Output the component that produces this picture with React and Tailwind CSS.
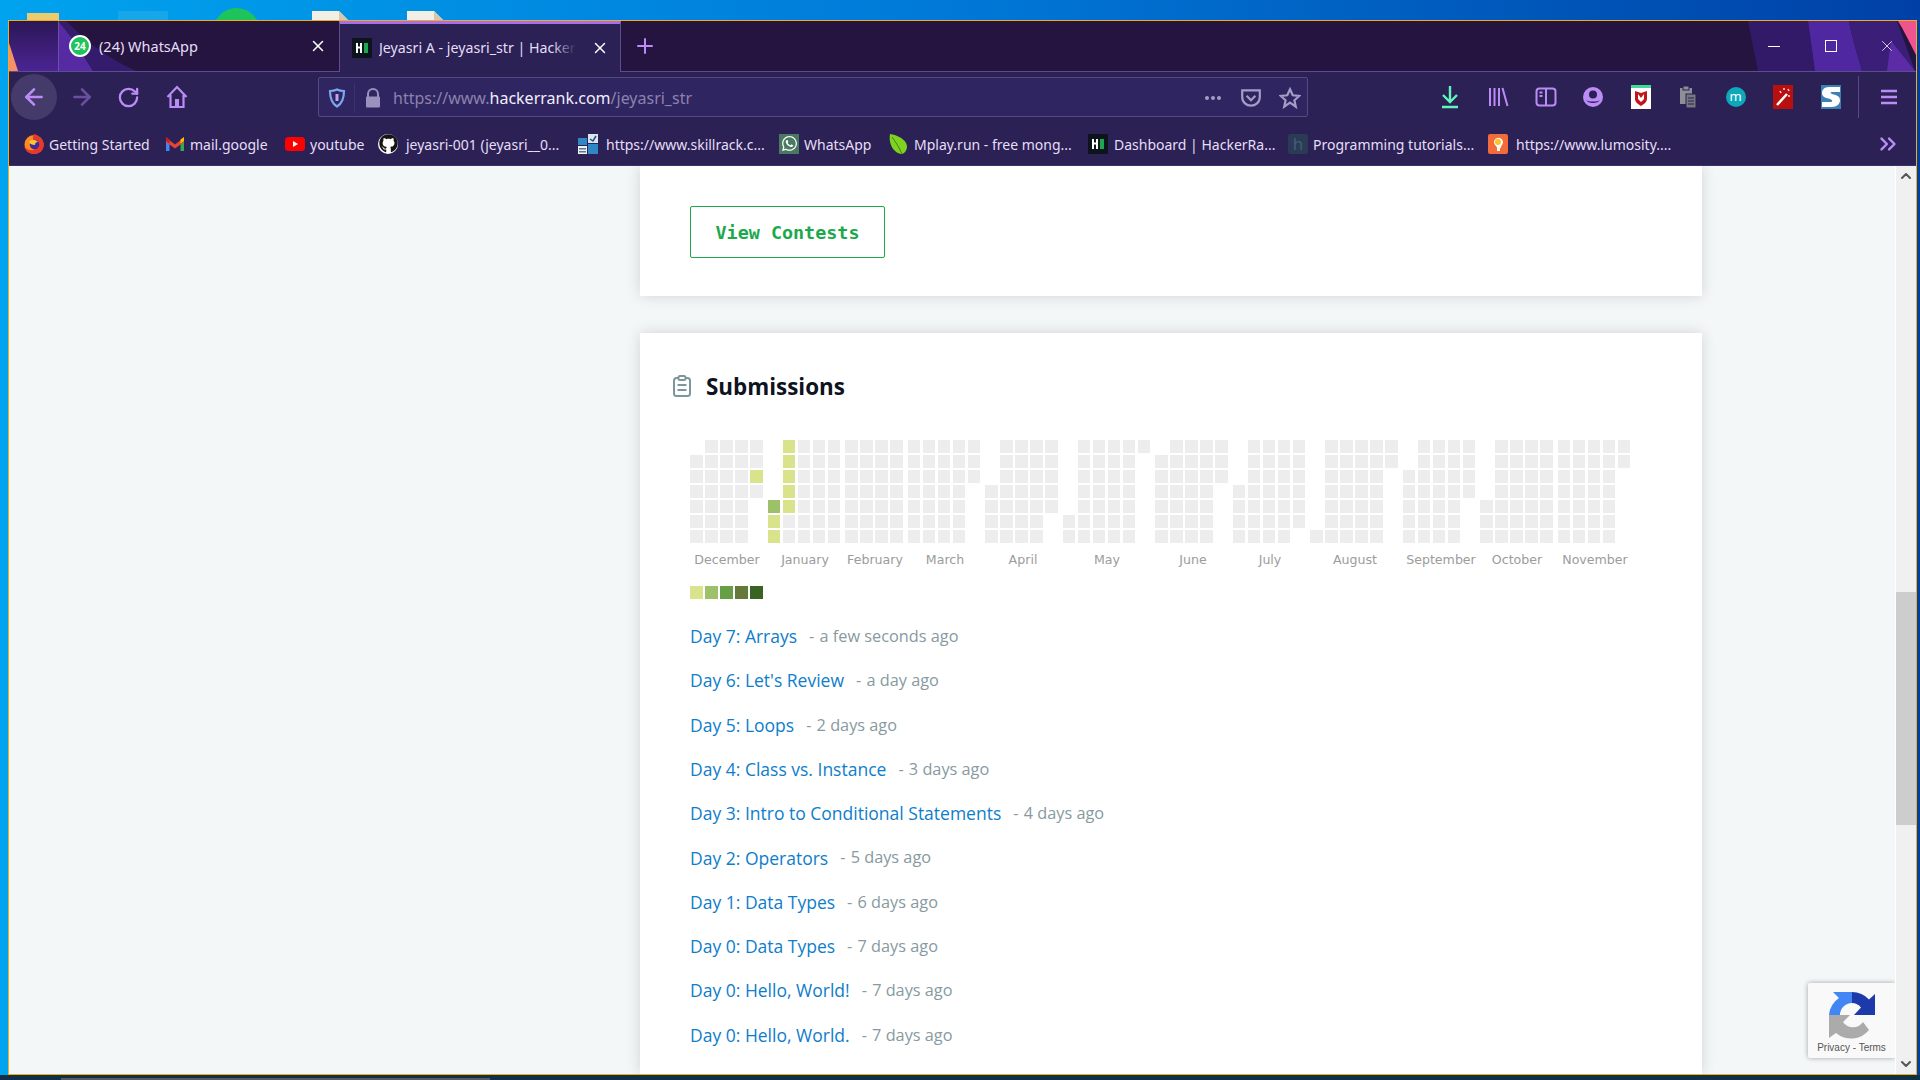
import React from "react";
import { ArrowLeft, ArrowRight, RotateCw, ChevronsRight, ChevronUp, ChevronDown, X, Plus } from "lucide-react";
import { FaGithub, FaWhatsapp } from "react-icons/fa";

const uiFont = "font-['Noto_Sans',sans-serif]";

const HackerRankIcon = () => (
  <svg width="20" height="20" viewBox="0 0 20 20" className="shrink-0">
    <rect width="20" height="20" fill="#0e141e" />
    <path d="M4 5h2v3.500h2V5h2v10H8v-4.500H6V15H4z" fill="#fff" />
    <rect x="12" y="5" width="4" height="10" fill="#1ba94c" />
  </svg>
);

const FirefoxIcon = () => (
  <svg width="20" height="20" viewBox="0 0 20 20" className="shrink-0">
    <circle cx="10" cy="10.500" r="9.500" fill="#ff8a1f" />
    <path d="M10 0c4 1 9 5 10 10 0 6-4 10-10 10-6 0-9-4-10-8 2 3 6 5 9 4 4-1 4-4 2-6C9 8 8 4 10 0z" fill="#e8382d" />
    <circle cx="10.500" cy="10.500" r="4.800" fill="#3f2a9a" />
    <path d="M5 8c2-3 6-3 9 0-2 0-3 1-3 3-3 0-5-1-6-3z" fill="#ffc531" />
  </svg>
);

const GmailIcon = () => (
  <svg width="20" height="20" viewBox="0 0 20 20" className="shrink-0">
    <path d="M1 5v12h3.500V8z" fill="#4285f4" />
    <path d="M15.500 8v9H19V5z" fill="#34a853" />
    <path d="M1 3.500 10 10.500l9-7v4.500l-9 6.500L1 8z" fill="#ea4335" />
    <path d="M15.500 5.500 19 3v4l-3.500 2.500z" fill="#fbbc04" />
    <path d="M1 3v4l3.500 2.500v-4z" fill="#c5221f" />
  </svg>
);

const YoutubeIcon = () => (
  <svg width="20" height="20" viewBox="0 0 20 20" className="shrink-0">
    <rect y="3" width="20" height="14" rx="3.500" fill="#f00" />
    <path d="M8 7l5 3-5 3z" fill="#fff" />
  </svg>
);

const GithubIcon = () => (
  <div className="flex h-[20px] w-[20px] shrink-0 items-center justify-center rounded-full bg-white">
    <FaGithub className="text-[19px] text-[#161514]" />
  </div>
);

const SkillrackIcon = () => (
  <svg width="20" height="20" viewBox="0 0 20 20" className="shrink-0">
    <rect y="4" width="9" height="7" fill="#2f87c5" />
    <rect x="10" y="0" width="10" height="9" fill="#d9e7ef" />
    <path d="M12 5l3 2 3-5" stroke="#2b4f78" strokeWidth="1.500" fill="none" />
    <rect x="10" y="10" width="10" height="10" fill="#2f87c5" />
    <rect y="12" width="9" height="8" fill="#eef3f6" />
    <rect x="1" y="14" width="7" height="1.500" fill="#60758a" />
    <rect x="1" y="17" width="7" height="1.500" fill="#60758a" />
  </svg>
);

const WhatsappSquare = () => (
  <div className="flex h-[20px] w-[20px] shrink-0 items-center justify-center bg-[#4b7860]">
    <FaWhatsapp className="text-[17px] text-white" />
  </div>
);

const LeafIcon = () => (
  <svg width="20" height="20" viewBox="0 0 20 20" className="shrink-0">
    <path d="M2 0c7 1 16 5 17 12 0 4-2 7-5 8C7 20 0 11 2 0z" fill="#7ed321" />
    <path d="M4 3c3 4 7 10 10 17" stroke="#3d6a10" strokeWidth="0.800" fill="none" />
  </svg>
);

const TutorialIcon = () => (
  <div className={`flex h-[20px] w-[20px] shrink-0 items-center justify-center rounded-[2px] bg-[#2b3b55] text-[17px] leading-none text-[#465a78] ${uiFont}`}>
    h
  </div>
);

const LumosityIcon = () => (
  <svg width="20" height="20" viewBox="0 0 20 20" className="shrink-0">
    <rect width="20" height="20" rx="2" fill="#f26b38" />
    <path d="M6 8a4.500 4.500 0 1 1 8 3c-1 1-1 2-1 3h-1v3H9v-3c0-2-3-3-3-6z" fill="#fff" />
    <circle cx="10" cy="8" r="3" fill="#ffc21f" />
  </svg>
);

const bookmarks = [
  { label: "Getting Started", icon: FirefoxIcon, w: "w-[141px]", gap: "gap-[5px]" },
  { label: "mail.google", icon: GmailIcon, w: "w-[120px]", gap: "gap-[5px]" },
  { label: "youtube", icon: YoutubeIcon, w: "w-[93px]", gap: "gap-[5px]" },
  { label: "jeyasri-001 (jeyasri__0...", icon: GithubIcon, w: "w-[200px]", gap: "gap-[8px]" },
  { label: "https://www.skillrack.c...", icon: SkillrackIcon, w: "w-[201px]", gap: "gap-[8px]" },
  { label: "WhatsApp", icon: WhatsappSquare, w: "w-[109px]", gap: "gap-[5px]" },
  { label: "Mplay.run - free mong...", icon: LeafIcon, w: "w-[200px]", gap: "gap-[6px]" },
  { label: "Dashboard | HackerRa...", icon: HackerRankIcon, w: "w-[200px]", gap: "gap-[6px]" },
  { label: "Programming tutorials...", icon: TutorialIcon, w: "w-[200px]", gap: "gap-[5px]" },
  { label: "https://www.lumosity....", icon: LumosityIcon, w: "w-[200px]", gap: "gap-[8px]" },
];

const submissions = [
  { name: "Day 7: Arrays", time: "a few seconds ago" },
  { name: "Day 6: Let's Review", time: "a day ago" },
  { name: "Day 5: Loops", time: "2 days ago" },
  { name: "Day 4: Class vs. Instance", time: "3 days ago" },
  { name: "Day 3: Intro to Conditional Statements", time: "4 days ago" },
  { name: "Day 2: Operators", time: "5 days ago" },
  { name: "Day 1: Data Types", time: "6 days ago" },
  { name: "Day 0: Data Types", time: "7 days ago" },
  { name: "Day 0: Hello, World!", time: "7 days ago" },
  { name: "Day 0: Hello, World.", time: "7 days ago" },
];

// x of each column on the page, then first and last filled row
const months = [
  { label: "December", cx: 727, w: 13, cols: [[690, 1, 6], [705, 0, 6], [720, 0, 6], [735, 0, 6], [750, 0, 3]] },
  { label: "January", cx: 805, w: 12, cols: [[768, 4, 6], [783, 0, 6], [798, 0, 6], [813, 0, 6], [828, 0, 6]] },
  { label: "February", cx: 875, w: 13, cols: [[845, 0, 6], [860, 0, 6], [875, 0, 6], [890, 0, 6]] },
  { label: "March", cx: 945, w: 12, cols: [[908, 0, 6], [923, 0, 6], [938, 0, 6], [953, 0, 6], [968, 0, 2]] },
  { label: "April", cx: 1023, w: 13, cols: [[985, 3, 6], [1000, 0, 6], [1015, 0, 6], [1030, 0, 6], [1045, 0, 4]] },
  { label: "May", cx: 1107, w: 12, cols: [[1063, 5, 6], [1078, 0, 6], [1093, 0, 6], [1108, 0, 6], [1123, 0, 6], [1138, 0, 0]] },
  { label: "June", cx: 1193, w: 13, cols: [[1155, 1, 6], [1170, 0, 6], [1185, 0, 6], [1200, 0, 6], [1215, 0, 2]] },
  { label: "July", cx: 1270, w: 12, cols: [[1233, 3, 6], [1248, 0, 6], [1263, 0, 6], [1278, 0, 6], [1293, 0, 5]] },
  { label: "August", cx: 1355, w: 13, cols: [[1310, 6, 6], [1325, 0, 6], [1340, 0, 6], [1355, 0, 6], [1370, 0, 6], [1385, 0, 1]] },
  { label: "September", cx: 1441, w: 12, cols: [[1403, 2, 6], [1418, 0, 6], [1433, 0, 6], [1448, 0, 6], [1463, 0, 3]] },
  { label: "October", cx: 1517, w: 13, cols: [[1480, 4, 6], [1495, 0, 6], [1510, 0, 6], [1525, 0, 6], [1540, 0, 6]] },
  { label: "November", cx: 1595, w: 12, cols: [[1558, 0, 6], [1573, 0, 6], [1588, 0, 6], [1603, 0, 6], [1618, 0, 1]] },
];

const filled = {
  "750-2": "#d9e38b",
  "768-4": "#9dc06a",
  "768-5": "#d9e38b",
  "768-6": "#d9e38b",
  "783-0": "#d9e38b",
  "783-1": "#d9e38b",
  "783-2": "#d9e38b",
  "783-3": "#d9e38b",
  "783-4": "#d9e38b",
};

const Heatmap = () => (
  <svg width="960" height="130" className="block">
    {months.map((m) => (
      <g key={m.label}>
        {m.cols.map(([x, from, to]) =>
          Array.from({ length: to - from + 1 }, (_, i) => from + i).map((r) => (
            <rect key={`${x}-${r}`} x={x - 690} y={r * 15} width={m.w} height="13" fill={filled[`${x}-${r}`] || "#ededed"} />
          ))
        )}
        <text x={m.cx - 690} y="124" textAnchor="middle" fontSize="12.600" fill="#9c9c9c" fontFamily="'DejaVu Sans', sans-serif">
          {m.label}
        </text>
      </g>
    ))}
  </svg>
);

const TitleDecorLeft = () => (
  <svg width="130" height="50" viewBox="0 0 130 50" className="absolute left-0 top-0" preserveAspectRatio="none">
    <defs>
      <linearGradient id="dl" x1="0" y1="0" x2="0" y2="1">
        <stop offset="0" stopColor="#2c1756" />
        <stop offset="1" stopColor="#4a2494" />
      </linearGradient>
    </defs>
    <rect width="49" height="50" fill="url(#dl)" />
    <path d="M49 0C62 14 72 30 84 50H49z" fill="#562aa2" />
    <path d="M49 0h8c16 14 28 30 70 50H84C72 30 62 14 49 0z" fill="#351b6c" />
    <path d="M0 22L9 50H0z" fill="#f79068" />
  </svg>
);

const TitleDecorRight = () => (
  <svg width="170" height="50" viewBox="0 0 170 50" className="absolute right-0 top-0">
    <path d="M2 0h60l7 50H12C8 30 5 15 2 0z" fill="#321a68" />
    <path d="M62 0h41c3 18 9 34 13 50H69z" fill="#4f27a0" />
    <path d="M103 0h48l18 50h-53c-4-16-10-32-13-50z" fill="#3a1e78" />
    <path d="M145 20l24 30h-28z" fill="#5c2ca6" />
    <path d="M152 0h18v34C164 22 158 10 152 0z" fill="#f0548e" />
  </svg>
);

const ToolIcon = ({ children }) => (
  <svg width="24" height="24" viewBox="0 0 24 24" fill="none" stroke="#bb8cf6" strokeWidth="2" className="shrink-0">
    {children}
  </svg>
);

const ToolbarRight = () => (
  <div className="ml-auto flex items-center">
    <div className="flex w-[48px] justify-center">
      <svg width="24" height="26" viewBox="0 0 24 26" fill="none" stroke="#62f5b9" strokeWidth="2.400">
        <path d="M12 2v15M5 11l7 7 7-7M4 23h16" />
      </svg>
    </div>
    <div className="flex w-[48px] justify-center">
      <ToolIcon>
        <path d="M4 3v18M8.500 3v18M13 3v18M16.500 3l5 18" />
      </ToolIcon>
    </div>
    <div className="flex w-[47px] justify-center">
      <ToolIcon>
        <rect x="2.500" y="3.500" width="19" height="17" rx="3" />
        <path d="M12 3.500v17M5.500 7.500h3M5.500 11h3" />
      </ToolIcon>
    </div>
    <div className="flex w-[48px] justify-center">
      <svg width="20" height="20" viewBox="0 0 20 20">
        <circle cx="10" cy="10" r="10" fill="#bb8cf6" />
        <circle cx="10" cy="7.500" r="4" fill="#2b1f55" />
        <path d="M3 13c2 4 12 4 14 0-2 2-12 2-14 0z" fill="#2b1f55" />
      </svg>
    </div>
    <div className="flex w-[47px] justify-center">
      <svg width="20" height="24" viewBox="0 0 20 24">
        <rect width="20" height="24" fill="#fff" />
        <rect width="20" height="3" fill="#3ddc97" />
        <path d="M4 6l6 2 6-2v8c0 3-3 5-6 7-3-2-6-4-6-7z" fill="#c01818" />
        <path d="M7 9l3 4 3-4v5l-3 3-3-3z" fill="#fff" />
      </svg>
    </div>
    <div className="flex w-[48px] justify-center">
      <svg width="18" height="24" viewBox="0 0 18 24" fill="none">
        <path d="M1 3h12v16H1z" fill="#8e8e96" />
        <rect x="4" y="1" width="6" height="4" fill="#8e8e96" stroke="#2b1f55" />
        <rect x="7" y="9" width="10" height="14" fill="#77777f" stroke="#2b1f55" />
        <path d="M9 13h6M9 16h6M9 19h6" stroke="#2b1f55" />
      </svg>
    </div>
    <div className="flex w-[47px] justify-center">
      <div className={`flex h-[20px] w-[20px] items-center justify-center rounded-full bg-[#0fa8bb] pb-[2px] text-[13px] leading-none text-white ${uiFont}`}>m</div>
    </div>
    <div className="flex w-[48px] justify-center">
      <svg width="20" height="24" viewBox="0 0 20 24">
        <rect width="20" height="24" fill="#b80f0f" />
        <path d="M4 20L14 9" stroke="#fff" strokeWidth="2.500" />
        <path d="M15 4l1 2M7 6l1 2M17 11l-2 0M11 3l0 2" stroke="#ffd9d9" strokeWidth="1.500" />
      </svg>
    </div>
    <div className="flex w-[47px] justify-center">
      <svg width="20" height="24" viewBox="0 0 20 24">
        <rect width="20" height="24" fill="#3f80b4" />
        <path d="M19 2H8C3 2 1 5 1 8c0 4 4 5 8 6 3 1 3 3 0 3H1v5h10c5 0 8-3 8-7 0-4-4-5-8-6-2-1-2-2 0-2h8z" fill="#fff" />
      </svg>
    </div>
    <div className="ml-[4px] h-[42px] w-px bg-[#57498a]" />
    <div className="flex w-[57px] justify-center pl-[2px]">
      <svg width="16" height="16" viewBox="0 0 16 16" fill="none" stroke="#bb8cf6" strokeWidth="2.400">
        <path d="M0 2h16M0 8h16M0 14h16" />
      </svg>
    </div>
  </div>
);

const RecaptchaLogo = () => (
  <svg width="48" height="48" viewBox="0 0 48 48" className="block">
    <path d="M24 1a23 23 0 0 1 17 7.500L47 3v21H26l7-7.500A12 12 0 0 0 24 12z" fill="#1c3aa9" />
    <path d="M24 1H5l6 6A23 23 0 0 0 1 24h11a12 12 0 0 1 12-12z" fill="#4285f4" />
    <path d="M1 24h21l-7 7a12 12 0 0 0 20 0l6 8a23 23 0 0 1-33 3l-7 5z" fill="#ababab" />
  </svg>
);

const DesktopDoc = ({ className }) => (
  <svg width="38" height="9" viewBox="0 0 38 9" className={className}>
    <path d="M0 0h27l9 9H0z" fill="#f1efe6" />
    <path d="M27 0l9 9h-9z" fill="#d8c8a8" />
  </svg>
);

const App = () => {
  return (
    <div className="flex h-screen w-screen flex-col overflow-hidden bg-gradient-to-r from-[#00a3ee] via-[#0078d7] to-[#0040a6]">
      <div className="relative h-[20px] shrink-0">
        <div className="absolute left-[27px] top-[13px] h-[7px] w-[32px] bg-[#eccb6e]" />
        <div className="absolute left-[118px] top-[11px] h-[9px] w-[50px] bg-[#18a6ea]" />
        <div className="absolute left-[213px] top-[8px] h-[47px] w-[47px] rounded-full bg-[#1ec35c]" />
        <DesktopDoc className="absolute left-[312px] top-[11px]" />
        <DesktopDoc className="absolute left-[407px] top-[11px]" />
      </div>

      <div className={`relative ml-[8px] mr-[3px] flex min-h-0 flex-1 flex-col border border-[#f5ad14] ${uiFont}`}>
        {/* tab strip */}
        <div className="relative flex h-[51px] shrink-0 border-b border-[#5c4d8f] bg-[#25143f]">
          <TitleDecorLeft />
          <TitleDecorRight />
          <div className="relative ml-[49px] flex h-[50px] w-[281px] items-center border-l border-[#6b4fa8] pl-[10px] text-[14.500px] text-[#e6def7]">
            <div className="flex h-[22px] w-[22px] items-center justify-center rounded-full border-2 border-white bg-[#1ec35c] text-[10px] font-bold leading-none text-white">24</div>
            <span className="ml-[8px] pt-[2px]">(24) WhatsApp</span>
            <X size={18} strokeWidth={2} className="absolute left-[250px] text-white" />
          </div>
          <div className="relative flex h-[51px] w-[282px] items-center border-x border-[#5c4d8f] border-t-[3px] border-t-[#a770e8] bg-[#2b2155] pl-[12px] text-[14.200px] text-[#e6def7]">
            <HackerRankIcon />
            <div className="relative ml-[7px] w-[197px] overflow-hidden whitespace-nowrap">
              Jeyasri A - jeyasri_str | Hacker
              <div className="absolute inset-y-0 right-0 w-[24px] bg-gradient-to-r from-transparent to-[#2b2155]" />
            </div>
            <X size={18} strokeWidth={2} className="absolute left-[251px] text-white" />
          </div>
          <Plus size={24} strokeWidth={2} className="relative ml-[12px] mt-[13px] text-[#bb8cf6]" />
          <div className="relative ml-auto flex h-[50px] text-white">
            <div className="flex w-[57px] items-center justify-center">
              <div className="h-px w-[12px] bg-white" />
            </div>
            <div className="flex w-[57px] items-center justify-center">
              <div className="h-[12px] w-[12px] border border-white" />
            </div>
            <div className="flex w-[57px] items-center justify-center pr-[2px]">
              <X size={18} strokeWidth={1} />
            </div>
          </div>
        </div>

        {/* nav bar */}
        <div className="flex h-[50px] shrink-0 items-center bg-[#2b2155] pl-[2px]">
          <div className="flex h-[46px] w-[46px] items-center justify-center rounded-full bg-[#453b6b]">
            <ArrowLeft size={26} strokeWidth={2.400} className="text-[#bb8cf6]" />
          </div>
          <ArrowRight size={26} strokeWidth={2.400} className="ml-[12px] text-[#6b4f9f]" />
          <RotateCw size={23} strokeWidth={2.400} className="ml-[22px] text-[#bb8cf6]" />
          <svg width="22" height="24" viewBox="0 0 22 24" fill="none" stroke="#bb8cf6" strokeWidth="2.200" className="ml-[26px]">
            <path d="M1.500 12L11 2l9.500 10M4.500 10v12h13V10" />
            <rect x="9" y="14" width="4" height="8" fill="#bb8cf6" stroke="none" />
          </svg>

          <div className="ml-[130px] flex h-[40px] w-[990px] shrink-0 items-center rounded-[2px] border border-[#55497f] bg-[#2f2560] pt-[2px] text-[16px]">
            <svg width="18" height="20" viewBox="0 0 18 20" fill="none" className="ml-[9px]">
              <path d="M9 1.500c2 1 5 1.500 7 1.500 0 8-2 12.500-7 15.500C4 15.500 2 11 2 3c2 0 5-.5 7-1.500z" stroke="#7fa6f0" strokeWidth="2.200" />
              <rect x="7.500" y="6" width="3" height="7" fill="#b9a7ec" />
            </svg>
            <div className="ml-[8px] h-[30px] w-px bg-[#3b3070]" />
            <svg width="16" height="20" viewBox="0 0 16 20" className="ml-[10px]">
              <path d="M3 9V6a5 5 0 0 1 10 0v3" fill="none" stroke="#9b91bd" strokeWidth="2" />
              <rect x="1" y="8.500" width="14" height="11" rx="1" fill="#9b91bd" />
            </svg>
            <div className="ml-[12px] whitespace-nowrap text-[#8c82ad]">
              https://www.<span className="text-[#f2eefb]">hackerrank.com</span>/jeyasri_str
            </div>
            <div className="ml-auto flex items-center gap-[2px]">
              <div className="h-[4px] w-[4px] rounded-full bg-[#a79cc6]" />
              <div className="h-[4px] w-[4px] rounded-full bg-[#a79cc6]" />
              <div className="h-[4px] w-[4px] rounded-full bg-[#a79cc6]" />
            </div>
            <svg width="22" height="20" viewBox="0 0 20 18" fill="none" stroke="#a79cc6" strokeWidth="2" className="ml-[19px]">
              <path d="M2 2h16v6c0 5-4 8-8 8s-8-3-8-8z" />
              <path d="M6 7l4 4 4-4" />
            </svg>
            <svg width="22" height="22" viewBox="0 0 24 24" fill="none" stroke="#a79cc6" strokeWidth="2.400" className="ml-[17px] mr-[6px]">
              <path d="M12 2.500l3 6.500 7 .8-5.200 4.700 1.500 7L12 17l-6.300 4.500 1.500-7L2 9.800 9 9z" />
            </svg>
          </div>
          <ToolbarRight />
        </div>

        {/* bookmarks */}
        <div className="flex h-[44px] shrink-0 items-center border-b border-[#3c2f6a] bg-[#2b2155] pl-[15px] text-[14px] text-[#e6def7]">
          {bookmarks.map((b) => {
            const Icon = b.icon;
            return (
              <div key={b.label} className={`flex shrink-0 items-center whitespace-nowrap ${b.w} ${b.gap}`}>
                <Icon />
                <span className="pt-[1px]">{b.label}</span>
              </div>
            );
          })}
          <ChevronsRight size={26} strokeWidth={2.200} className="ml-[187px] text-[#bb8cf6]" />
        </div>

        {/* page */}
        <div className="flex min-h-0 flex-1">
          <div className="relative min-w-0 flex-1 overflow-hidden bg-[#f3f7f7]">
            <div className="ml-[631px] flex h-full w-[1062px] flex-col font-['Open_Sans',sans-serif]">
              <div className="shrink-0 bg-white pb-[38px] pl-[50px] pt-[40px] shadow-[0_0_14px_rgba(0,0,0,0.14)]">
                <div className="flex h-[52px] w-[195px] items-center justify-center rounded-[2px] border border-[#1ba94c] pt-[2px] font-['DejaVu_Sans_Mono',monospace] text-[18.400px] font-bold text-[#1ba94c]">
                  View Contests
                </div>
              </div>

              <div className="mt-[37px] min-h-0 flex-1 overflow-hidden bg-white pl-[33px] pt-[38px] shadow-[0_0_14px_rgba(0,0,0,0.14)]">
                <div className="flex h-[30px] items-center gap-[15px]">
                  <svg width="18" height="22" viewBox="0 0 18 22" fill="none" stroke="#7d979d" strokeWidth="2">
                    <rect x="1" y="3" width="16" height="18" rx="2.500" />
                    <rect x="5.500" y="1" width="7" height="4" rx="1.500" fill="#fff" />
                    <path d="M4.500 10h9M4.500 15h9" />
                  </svg>
                  <h2 className="pt-[2px] text-[22.400px] font-bold leading-none text-[#0e1320]">Submissions</h2>
                </div>

                <div className="ml-[17px] mt-[39px]">
                  <Heatmap />
                  <div className="mt-[16px] flex gap-[2px]">
                    <div className="h-[13px] w-[13px] bg-[#d9e38b]" />
                    <div className="h-[13px] w-[13px] bg-[#9dc06a]" />
                    <div className="h-[13px] w-[13px] bg-[#669f45]" />
                    <div className="h-[13px] w-[13px] bg-[#64793b]" />
                    <div className="h-[13px] w-[13px] bg-[#386322]" />
                  </div>

                  <div className="mt-[15px]">
                    {submissions.map((s) => (
                      <div key={s.name} className="flex h-[44.300px] items-center">
                        <span className="text-[17.500px] text-[#0e7dcb]">{s.name}</span>
                        <span className="ml-[12px] text-[16.300px] text-[#879a9f]">
                          <span className="mr-[1px]">-</span> {s.time}
                        </span>
                      </div>
                    ))}
                  </div>
                </div>
              </div>
            </div>

            <div className="absolute bottom-[16px] right-0 h-[75px] w-[87px] rounded-l-[2px] bg-[#f9f9f9] shadow-[0_0_5px_rgba(0,0,0,0.35)]">
              <div className="flex justify-center pt-[8px]">
                <RecaptchaLogo />
              </div>
              <div className="mt-[4px] text-center font-['Liberation_Sans',sans-serif] text-[10px] leading-none text-[#555]">Privacy - Terms</div>
            </div>
          </div>

          {/* scrollbar */}
          <div className="flex w-[21px] shrink-0 flex-col items-center border-l border-white bg-[#f0f0f0] pt-[2px] text-[#555]">
            <ChevronUp size={16} strokeWidth={3} />
            <div className="mt-[408px] h-[233px] w-full bg-[#cdcdcd]" />
            <ChevronDown size={16} strokeWidth={3} className="mb-[2px] mt-auto" />
          </div>
        </div>
      </div>

      <div className="relative h-[5px] shrink-0 bg-[#103049]">
        <div className="absolute left-[61px] top-[3px] h-[2px] w-[429px] bg-[#555b60]" />
      </div>
    </div>
  );
};

export default App;
